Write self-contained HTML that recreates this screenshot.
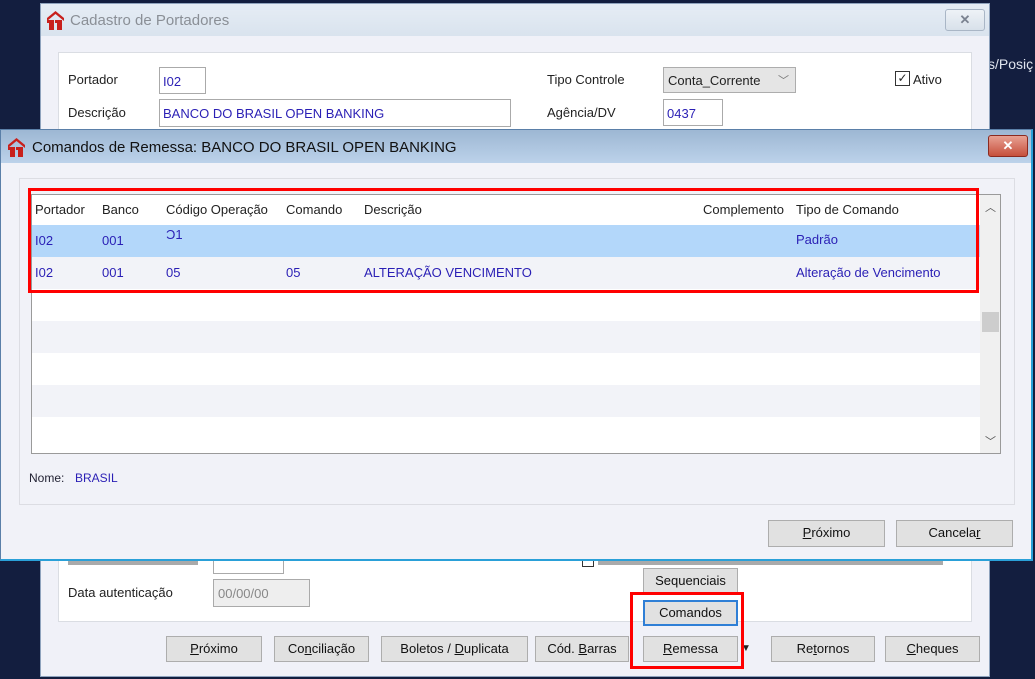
<!DOCTYPE html>
<html><head><meta charset="utf-8">
<style>
*{box-sizing:border-box;margin:0;padding:0}
body{width:1035px;height:679px;overflow:hidden;background:#131e3f;font-family:"Liberation Sans",sans-serif;font-size:13px;color:#222;position:relative}
.abs{position:absolute}
.btn{position:absolute;background:#e1e1e1;border:1px solid #adadad;text-align:center;line-height:24px;font-size:13px;color:#111}
.blue{color:#2a1fb5}
.logo{position:absolute;width:17px;height:19px}
.cell{position:absolute;top:0;line-height:30px}
</style></head><body>

<div class="abs" style="left:988px;top:56px;color:#dfe4ee;font-size:14px">s/Posiç</div>

<!-- back window -->
<div class="abs" style="left:40px;top:3px;width:950px;height:674px;background:#f0f1f8;border:1px solid #8fa3bd">
  <div class="abs" style="left:0;top:0;width:948px;height:32px;background:linear-gradient(#e6edf5,#d9e3ee)"></div>
  <svg class="logo" style="left:6px;top:7px" viewBox="0 0 17 19"><path d="M0 7 L8.5 0 L17 7 L17 10 L8.5 3 L0 10Z" fill="#c8201c"/><rect x="2" y="9" width="5" height="10" fill="#c8201c"/><rect x="10" y="9" width="5" height="10" fill="#c8201c"/><rect x="0" y="9" width="3" height="3" fill="#c8201c"/><rect x="8" y="9" width="3" height="3" fill="#c8201c"/></svg>
  <div class="abs" style="left:29px;top:8px;font-size:15px;color:#8a8f96">Cadastro de Portadores</div>
  <div class="abs" style="left:904px;top:5px;width:40px;height:22px;border:1px solid #a9b6c6;border-radius:3px;background:linear-gradient(#eef2f7,#d8e1ea);text-align:center;color:#7a8290;font-weight:bold;line-height:20px">✕</div>
  <div class="abs" style="left:17px;top:48px;width:914px;height:570px;background:#fff;border:1px solid #dadde3"></div>
</div>
<div class="abs" style="left:68px;top:72px">Portador</div>
<div class="abs" style="left:159px;top:67px;width:47px;height:27px;border:1px solid #aaa;background:#fff;padding:6px 0 0 3px"><span class="blue">I02</span></div>
<div class="abs" style="left:68px;top:105px">Descrição</div>
<div class="abs" style="left:159px;top:99px;width:352px;height:28px;border:1px solid #aaa;background:#fff;padding:6px 0 0 3px"><span class="blue">BANCO DO BRASIL OPEN BANKING</span></div>
<div class="abs" style="left:547px;top:72px">Tipo Controle</div>
<div class="abs" style="left:663px;top:67px;width:133px;height:26px;border:1px solid #adadad;background:#e5e5e5;padding:5px 0 0 4px">Conta_Corrente <span style="position:absolute;right:6px;top:4px;color:#777;font-size:11px">﹀</span></div>
<div class="abs" style="left:895px;top:71px;width:15px;height:15px;border:1px solid #333;background:#fff;font-size:12px;line-height:13px;text-align:center">✓</div>
<div class="abs" style="left:913px;top:72px">Ativo</div>
<div class="abs" style="left:547px;top:105px">Agência/DV</div>
<div class="abs" style="left:663px;top:99px;width:60px;height:27px;border:1px solid #aaa;background:#fff;padding:6px 0 0 3px"><span class="blue">0437</span></div>

<!-- lower back window content -->
<div class="abs" style="left:68px;top:561px;width:130px;height:4px;background:#555;opacity:.5"></div>
<div class="abs" style="left:213px;top:560px;width:71px;height:14px;border:1px solid #aaa;border-top:none;background:#fff"></div>
<div class="abs" style="left:582px;top:560px;width:12px;height:7px;border:1px solid #333;border-top:none"></div>
<div class="abs" style="left:598px;top:561px;width:345px;height:4px;background:#555;opacity:.5"></div>
<div class="abs" style="left:68px;top:585px">Data autenticação</div>
<div class="abs" style="left:213px;top:579px;width:97px;height:28px;border:1px solid #aaa;background:#eee;padding:6px 0 0 4px;color:#888">00/00/00</div>
<div class="btn" style="left:643px;top:568px;width:95px;height:26px">Sequenciais</div>
<div class="btn" style="left:643px;top:600px;width:95px;height:26px;border:2px solid #2f7fd6;line-height:22px">Comandos</div>
<div class="btn" style="left:643px;top:636px;width:95px;height:26px"><u>R</u>emessa</div>
<div class="abs" style="left:741px;top:643px;font-size:10px">▼</div>
<div class="btn" style="left:166px;top:636px;width:96px;height:26px"><u>P</u>róximo</div>
<div class="btn" style="left:274px;top:636px;width:95px;height:26px">Co<u>n</u>ciliação</div>
<div class="btn" style="left:381px;top:636px;width:147px;height:26px">Boletos / <u>D</u>uplicata</div>
<div class="btn" style="left:535px;top:636px;width:94px;height:26px">Cód. <u>B</u>arras</div>
<div class="btn" style="left:771px;top:636px;width:104px;height:26px">Re<u>t</u>ornos</div>
<div class="btn" style="left:885px;top:636px;width:95px;height:26px"><u>C</u>heques</div>
<div class="abs" style="left:630px;top:592px;width:114px;height:77px;border:3px solid #f00"></div>

<!-- front dialog -->
<div class="abs" style="left:0;top:129px;width:1033px;height:432px;background:#f1f2f8;border:1px solid #5a7fa8;border-bottom:2px solid #2aa0d8;border-right:2px solid #2aa0d8">
  <div class="abs" style="left:0;top:0;width:1030px;height:33px;background:linear-gradient(#9db7d3,#bcd2ea)"></div>
  <svg class="logo" style="left:7px;top:8px" viewBox="0 0 17 19"><path d="M0 7 L8.5 0 L17 7 L17 10 L8.5 3 L0 10Z" fill="#c8201c"/><rect x="2" y="9" width="5" height="10" fill="#c8201c"/><rect x="10" y="9" width="5" height="10" fill="#c8201c"/><rect x="0" y="9" width="3" height="3" fill="#c8201c"/><rect x="8" y="9" width="3" height="3" fill="#c8201c"/></svg>
  <div class="abs" style="left:31px;top:9px;font-size:15px;color:#111">Comandos de Remessa: BANCO DO BRASIL OPEN BANKING</div>
  <div class="abs" style="left:987px;top:5px;width:40px;height:22px;border:1px solid #8b2a20;border-radius:3px;background:linear-gradient(#e8a193,#c6503c);text-align:center;color:#fff;font-weight:bold;line-height:20px">✕</div>
  <div class="abs" style="left:18px;top:48px;width:996px;height:327px;border:1px solid #dcdde3"></div>
</div>

<!-- grid -->
<div class="abs" style="left:31px;top:194px;width:970px;height:260px;border:1px solid #9a9a9a;background:#fff;overflow:hidden">
  <div class="abs" style="left:0;top:0;width:948px;height:30px;background:#fff;font-size:13px">
    <div class="cell" style="left:3px">Portador</div>
    <div class="cell" style="left:70px">Banco</div>
    <div class="cell" style="left:134px">Código Operação</div>
    <div class="cell" style="left:254px">Comando</div>
    <div class="cell" style="left:332px">Descrição</div>
    <div class="cell" style="left:671px">Complemento</div>
    <div class="cell" style="left:764px">Tipo de Comando</div>
  </div>
  <div class="abs blue" style="left:0;top:30px;width:948px;height:32px;background:#b3d7fa">
    <div class="cell" style="left:3px;top:1px">I02</div><div class="cell" style="left:70px;top:1px">001</div>
    <div class="cell" style="left:134px;top:-5px">Ɔ1</div><div class="cell" style="left:764px;top:0">Padrão</div>
  </div>
  <div class="abs blue" style="left:0;top:62px;width:948px;height:32px;background:#f2f3f8">
    <div class="cell" style="left:3px;top:1px">I02</div><div class="cell" style="left:70px;top:1px">001</div>
    <div class="cell" style="left:134px;top:1px">05</div><div class="cell" style="left:254px;top:1px">05</div>
    <div class="cell" style="left:332px;top:1px">ALTERAÇÃO VENCIMENTO</div>
    <div class="cell" style="left:764px;top:1px">Alteração de Vencimento</div>
  </div>
  <div class="abs" style="left:0;top:126px;width:948px;height:32px;background:#f2f3f8"></div>
  <div class="abs" style="left:0;top:190px;width:948px;height:32px;background:#f2f3f8"></div>
  <div class="abs" style="left:948px;top:0;width:20px;height:258px;background:#f0f0f0">
    <div class="abs" style="left:5px;top:4px;font-size:11px;color:#555">︿</div>
    <div class="abs" style="left:2px;top:117px;width:17px;height:20px;background:#cdcdcd"></div>
    <div class="abs" style="left:5px;top:238px;font-size:11px;color:#555">﹀</div>
  </div>
</div>
<div class="abs" style="left:28px;top:188px;width:951px;height:105px;border:3px solid #f00"></div>

<div class="abs" style="left:29px;top:471px;font-size:12px;color:#223">Nome:</div>
<div class="abs blue" style="left:75px;top:471px;font-size:12px">BRASIL</div>
<div class="btn" style="left:768px;top:520px;width:117px;height:27px"><u>P</u>róximo</div>
<div class="btn" style="left:896px;top:520px;width:117px;height:27px">Cancela<u>r</u></div>

</body></html>
